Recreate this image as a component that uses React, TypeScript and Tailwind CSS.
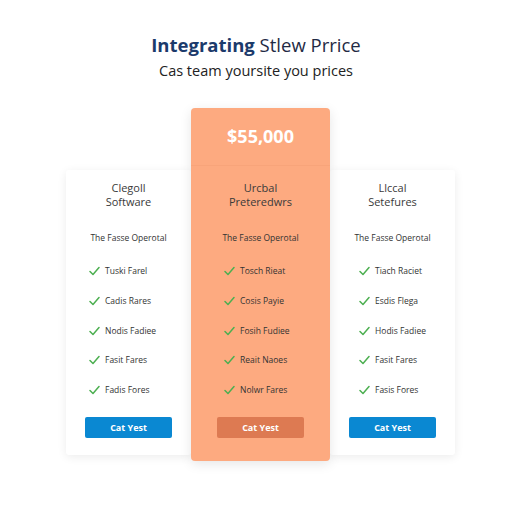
const plans = [
  {
    title: ["Clegoll", "Software"],
    features: ["Tuski Farel", "Cadis Rares", "Nodis Fadiee", "Fasit Fares", "Fadis Fores"],
    pad: "pl-[23px]",
  },
  {
    title: ["Urcbal", "Preteredwrs"],
    features: ["Tosch Rieat", "Cosis Payie", "Fosih Fudiee", "Reait Naoes", "Nolwr Fares"],
    pad: "pl-[33px]",
  },
  {
    title: ["Llccal", "Setefures"],
    features: ["Tiach Raciet", "Esdis Flega", "Hodis Fadiee", "Fasit Fares", "Fasis Fores"],
    pad: "pl-[29px]",
  },
];

function Check() {
  return (
    <svg width="11" height="10" viewBox="0 0 11 10" fill="none" className="shrink-0">
      <path d="M1 5.5 L4 8.5 L10 1.5" stroke="#4caf50" strokeWidth="1.5" strokeLinecap="round" strokeLinejoin="round" />
    </svg>
  );
}

function PlanBody({ plan, featured }: { plan: (typeof plans)[number]; featured?: boolean }) {
  return (
    <div className="flex flex-col items-center pt-[11px]">
      <div className="text-center text-[11px] leading-[13.5px] text-[#3a3a3a]">
        <div>{plan.title[0]}</div>
        <div>{plan.title[1]}</div>
      </div>
      <div className="mt-[25px] text-[8.5px] leading-[10px] text-[#333]">The Fasse Operotal</div>
      <ul className={`mt-[23px] flex flex-col gap-[19.75px] self-stretch ${plan.pad}`}>
        {plan.features.map((f) => (
          <li key={f} className="flex items-center gap-[5px] text-[8.5px] leading-[10px] text-[#333]">
            <Check />
            <span>{f}</span>
          </li>
        ))}
      </ul>
      <button
        className={`mt-[22px] h-[21px] w-[87px] rounded-[2px] text-[9px] font-bold text-white ${
          featured ? "bg-[#dd7a52]" : "bg-[#0a88d2]"
        }`}
      >
        Cat Yest
      </button>
    </div>
  );
}

export default function App() {
  return (
    <div className="h-[512px] w-[512px] bg-white" style={{ fontFamily: "'Open Sans', Lato, sans-serif" }}>
      <div className="pt-[32px] text-center">
        <h1 className="text-[18.5px] leading-[26px] text-[#1f2a44]">
          <span className="font-bold text-[#1b3a6b]">Integrating</span> Stlew Prrice
        </h1>
        <p className="mt-[2px] text-[14.5px] leading-[22px] text-[#222]">Cas team yoursite you prices</p>
      </div>

      <div className="mt-[26px] flex items-start pl-[66px]">
        <div className="mt-[62px] h-[285px] w-[125px] rounded-[3px] bg-white shadow-[0_2px_10px_rgba(0,0,0,0.08)]">
          <PlanBody plan={plans[0]} />
        </div>
        <div className="relative z-10 h-[353px] w-[139px] rounded-[4px] bg-[#fdaa80] shadow-[0_3px_12px_rgba(0,0,0,0.1)]">
          <div className="flex h-[58px] items-center justify-center border-b border-[#f8a47a] text-[18px] font-bold text-white">
            $55,000
          </div>
          <div className="pt-[4px]">
            <PlanBody plan={plans[1]} featured />
          </div>
        </div>
        <div className="mt-[62px] h-[285px] w-[125px] rounded-[3px] bg-white shadow-[0_2px_10px_rgba(0,0,0,0.08)]">
          <PlanBody plan={plans[2]} />
        </div>
      </div>
    </div>
  );
}
